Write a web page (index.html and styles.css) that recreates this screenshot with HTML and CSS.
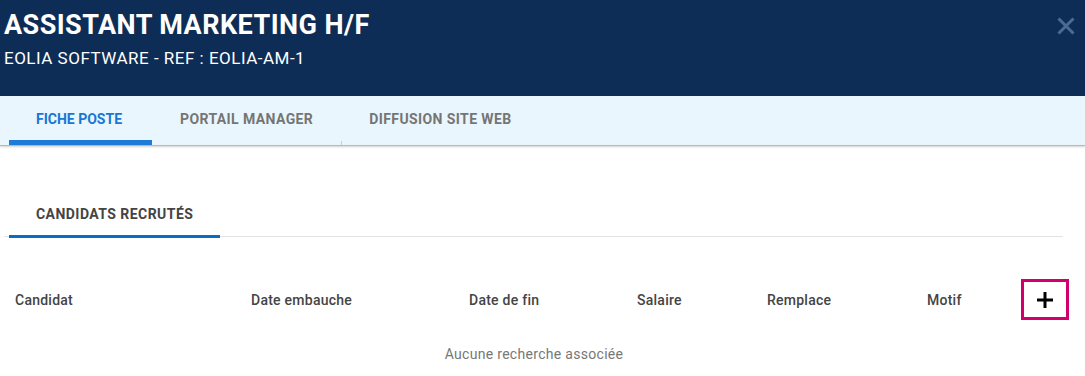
FILE: index.html
```html
<!DOCTYPE html>
<html lang="fr">
<head>
<meta charset="utf-8">
<title>Assistant Marketing H/F</title>
<link rel="stylesheet" href="styles.css">
</head>
<body>
<header class="header">
  <div class="header-text">
    <h1 class="title">ASSISTANT MARKETING H/F</h1>
    <div class="subtitle">EOLIA SOFTWARE - REF : EOLIA-AM-1</div>
  </div>
  <button class="close" aria-label="Fermer">
    <svg width="18" height="18" viewBox="0 0 18 18"><path d="M1.5 1.5 L16.5 16.5 M16.5 1.5 L1.5 16.5" stroke="#4a6b95" stroke-width="3" fill="none"/></svg>
  </button>
</header>
<nav class="tabs">
  <div class="tab active">FICHE POSTE</div>
  <div class="tab">PORTAIL MANAGER</div>
  <div class="tab divided">DIFFUSION SITE WEB</div>
</nav>
<main class="content">
  <div class="subtabs">
    <div class="subtab">CANDIDATS RECRUTÉS</div>
  </div>
  <div class="table-head">
    <div class="cell">Candidat</div>
    <div class="cell">Date embauche</div>
    <div class="cell">Date de fin</div>
    <div class="cell">Salaire</div>
    <div class="cell">Remplace</div>
    <div class="cell">Motif</div>
    <button class="add" aria-label="Ajouter">
      <svg width="18" height="18" viewBox="0 0 18 18"><path d="M9 1 V17 M1 9 H17" stroke="#000" stroke-width="3" fill="none"/></svg>
    </button>
  </div>
  <div class="empty">Aucune recherche associée</div>
</main>
</body>
</html>
```
FILE: styles.css
```css
* { box-sizing: border-box; }
html, body { margin: 0; padding: 0; background: #fff; }
body {
  font-family: Roboto, "Liberation Sans", Arial, sans-serif;
  width: 1085px;
  height: 376px;
  overflow: hidden;
}
.header {
  background: #0e2d56;
  height: 96px;
  display: flex;
  justify-content: space-between;
  align-items: flex-start;
  padding: 9px 10px 0 4px;
}
.title {
  margin: 0;
  color: #fff;
  font-size: 27px;
  line-height: 32px;
  font-weight: 700;
  letter-spacing: 0.45px;
}
.subtitle {
  margin-top: 7px;
  color: #fff;
  font-size: 17px;
  line-height: 20px;
  letter-spacing: 0.5px;
}
.close {
  background: none;
  border: 0;
  padding: 0;
  margin-top: 8px;
  width: 18px;
  height: 18px;
  display: block;
}
.close svg { display: block; }
.tabs {
  background: #eaf6fd;
  height: 50px;
  display: flex;
  padding-left: 9px;
  border-bottom: 1px solid #b5b9bc;
  box-shadow: 0 1px 2px rgba(0,0,0,0.18);
  position: relative;
}
.tab {
  position: relative;
  height: 49px;
  padding: 0 28px 3px;
  display: flex;
  align-items: center;
  font-size: 14px;
  font-weight: 700;
  color: #757575;
  letter-spacing: 0.4px;
}
.tab.active { color: #1976d2; letter-spacing: 0; padding: 0 30px 3px 27px; }
.tab.active::after {
  content: "";
  position: absolute;
  left: 0;
  right: 0;
  bottom: 0;
  height: 5px;
  background: #1e7bd8;
}
.tab.divided::before {
  content: "";
  position: absolute;
  left: 0;
  bottom: 0;
  width: 1px;
  height: 4px;
  background: #c9ced2;
}
.content { padding-top: 43px; }
.subtabs {
  margin-left: 4px;
  width: 1059px;
  border-bottom: 1px solid #e3e3e3;
  display: flex;
}
.subtab {
  position: relative;
  margin-left: 5px;
  height: 47px;
  padding: 17px 27px 0;
  font-size: 14px;
  line-height: 16px;
  font-weight: 700;
  color: #444;
  letter-spacing: 0.45px;
}
.subtab::after {
  content: "";
  position: absolute;
  left: 0;
  right: 0;
  bottom: -2px;
  height: 3px;
  background: #0a6dc2;
}
.table-head {
  margin-top: 42px;
  margin-left: 9px;
  display: grid;
  grid-template-columns: 236px 218px 168px 130px 160px 100px 48px;
  align-items: center;
  height: 41px;
}
.cell {
  padding-left: 6px;
  font-size: 14px;
  font-weight: 500;
  color: #444;
  letter-spacing: 0.25px;
}
.add {
  width: 48px;
  height: 41px;
  border: 3px solid #d1006c;
  background: #fff;
  padding: 0;
  display: flex;
  align-items: center;
  justify-content: center;
}
.add svg { display: block; }
.empty {
  margin-left: 9px;
  width: 1050px;
  text-align: center;
  margin-top: 26px;
  font-size: 14px;
  line-height: 16px;
  color: #777;
  letter-spacing: 0.3px;
}
```
